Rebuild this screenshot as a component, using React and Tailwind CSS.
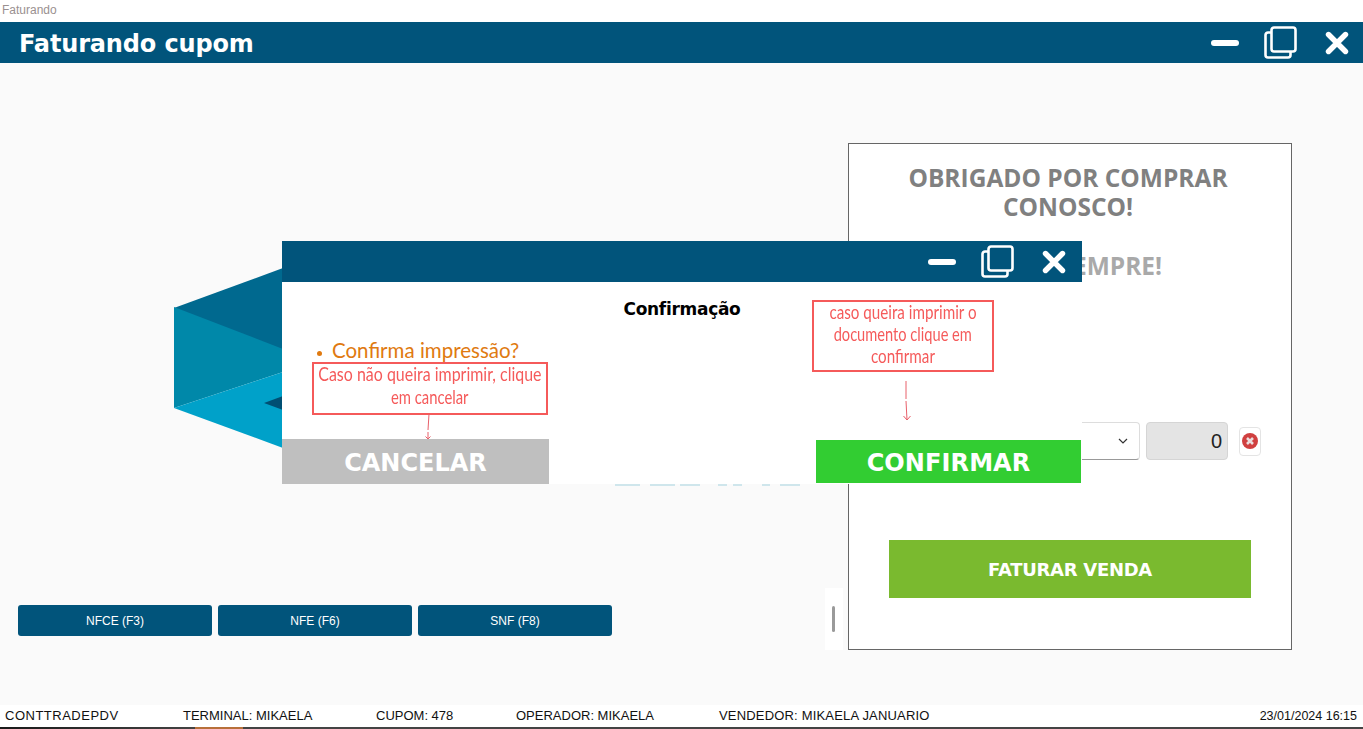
const headFont = "font-['DejaVu_Sans',sans-serif]";
const panelFont = "font-['Open_Sans',sans-serif]";
const handNote = "flex flex-col items-center justify-center border-2 border-[#f55a5a] bg-white text-center font-['Lato',sans-serif] text-[19px] whitespace-nowrap text-[#f55a5a]";

function WinControls() {
  return (
    <div className="flex items-center">
      <svg width="28" height="8" viewBox="0 0 28 8" className="mr-[25px]">
        <rect x="0" y="1" width="28" height="6" rx="3" fill="#fff" />
      </svg>
      <svg width="33" height="33" viewBox="0 0 33 33" className="mr-[28px]" fill="none" stroke="#fff" strokeWidth="2.6">
        <rect x="7.5" y="1.5" width="24" height="24" rx="2.5" />
        <path d="M7 6.5H4A2.5 2.5 0 0 0 1.5 9v20A2.5 2.5 0 0 0 4 31.5h20a2.5 2.5 0 0 0 2.5-2.5v-3" />
      </svg>
      <svg width="24" height="24" viewBox="0 0 24 24" fill="none" stroke="#fff" strokeWidth="5.4" strokeLinecap="round">
        <path d="M3.5 3.5 20.5 20.5M20.5 3.5 3.5 20.5" />
      </svg>
    </div>
  );
}

function Cube() {
  return (
    <svg width="110" height="184" viewBox="0 0 110 184" className="absolute left-[173px] top-[205px] blur-[0.5px]">
      <polygon points="1,40 110,0 110,84" fill="#00698f" />
      <polygon points="1,39 110,81 110,104 1,140" fill="#0088a9" />
      <polygon points="1,140 110,104 110,180" fill="#00a1c9" />
      <polygon points="91,135 110,128 110,142" fill="#004f73" />
    </svg>
  );
}

function LogoRemnant() {
  const bars = [[0, 25], [35, 25], [65, 20], [103, 9], [118, 9], [147, 8], [165, 20]];
  return (
    <svg width="190" height="2" viewBox="0 0 190 2" className="absolute left-[615px] top-[421px]">
      {bars.map(([x, w]) => (
        <rect key={x} x={x} y="0" width={w} height="2" fill="#cfe6ec" />
      ))}
    </svg>
  );
}

export default function App() {
  return (
    <div className="relative flex h-[729px] w-[1363px] flex-col overflow-hidden bg-white font-['Liberation_Sans',sans-serif]">
      <div className="h-[22px] pl-[2px] pt-[3px] text-[12px] leading-[15px] text-[#9a9090]">Faturando</div>

      <header className="flex h-[41px] items-center justify-between bg-[#01547b] pl-[19px] pr-[14px]">
        <h1 className={`${headFont} translate-y-[1px] text-[24px] font-bold leading-none tracking-[-0.15px] text-white`}>Faturando cupom</h1>
        <WinControls />
      </header>

      <main className="relative flex h-[642px] bg-[#fafafa]">
        <Cube />
        <LogoRemnant />
        <div className="flex w-[825px] flex-col justify-end pb-[69px] pl-[18px]">
          <div className="flex gap-[6px]">
            {["NFCE (F3)", "NFE (F6)", "SNF (F8)"].map((b) => (
              <button key={b} className="h-[31px] w-[194px] rounded-[3px] bg-[#01547b] text-[12px] text-white">{b}</button>
            ))}
          </div>
        </div>
        <div className="mt-[525px] flex h-[62px] w-[18px] items-center justify-center bg-white">
          <div className="mr-[1px] h-[26px] w-[3px] rounded-sm bg-[#9a9a9a]" />
        </div>
        <div className="ml-[5px] mr-[5px] mt-[80px] flex h-[507px] w-[444px] flex-col items-center border border-[#666] bg-white">
          <h2 className={`${panelFont} mt-[19px] w-[420px] -translate-x-[2px] text-center text-[24.5px] font-bold leading-[29px] text-[#808080]`}>
            OBRIGADO POR COMPRAR CONOSCO!
          </h2>
          <h3 className={`${panelFont} mt-[30px] -translate-x-[1px] text-center text-[24.5px] font-bold leading-[29px] text-[#a9a9a9]`}>VOLTE SEMPRE!</h3>
          <div className="mt-[142px] flex w-full items-center pl-[40px]">
            <div className="flex h-[38px] w-[251px] items-center justify-end rounded-[4px] border border-[#ddd] border-b-[#999] bg-white pr-[11px]">
              <svg width="10" height="6" viewBox="0 0 10 6" fill="none" stroke="#333" strokeWidth="1.2"><path d="M1 1l4 4 4-4" /></svg>
            </div>
            <div className="ml-[6px] flex h-[38px] w-[82px] items-center justify-end rounded-[4px] border border-[#d5d5d5] bg-[#e4e4e4] pr-[5px] text-[20px] text-[#222]">0</div>
            <div className="ml-[11px] flex h-[29px] w-[22px] items-center justify-center rounded-[4px] border border-[#e4e4e4] bg-white">
              <svg width="16" height="16" viewBox="0 0 16 16">
                <circle cx="8" cy="8" r="8" fill="#d04040" />
                <path d="M5 5l6 6M11 5l-6 6" stroke="#eadede" strokeWidth="2.6" />
              </svg>
            </div>
          </div>
          <button className={`${headFont} mt-[80px] h-[58px] w-[362px] bg-[#7aba2f] text-[18px] font-bold tracking-[-0.3px] text-white`}>FATURAR VENDA</button>
        </div>
      </main>

      <footer className="flex h-[22px] items-center bg-white pl-[5px] pr-[6px] text-[13px] text-[#111]">
        <span className="w-[178px] tracking-[0.5px]">CONTTRADEPDV</span>
        <span className="w-[193px]">TERMINAL: MIKAELA</span>
        <span className="w-[140px]">CUPOM: 478</span>
        <span className="w-[203px]">OPERADOR: MIKAELA</span>
        <span className="tracking-[0.18px]">VENDEDOR: MIKAELA JANUARIO</span>
        <span className="ml-auto text-[12.5px]">23/01/2024 16:15</span>
      </footer>
      <div className="flex h-[2px] bg-[linear-gradient(to_right,#1a1a1a,#444_200px)]">
        <div className="ml-[195px] h-[2px] w-[48px] bg-[#b8703a]" />
      </div>

      <section className="absolute left-[282px] top-[241px] flex h-[243px] w-[800px] flex-col bg-white">
        <div className="flex h-[41px] items-center justify-end bg-[#01547b] pr-[16px]"><WinControls /></div>
        <div className={`${headFont} pt-[17px] text-center text-[17px] font-bold leading-[20px] tracking-[-0.3px] text-black`}>Confirmação</div>
        <div className="flex items-center pl-[35px] pt-[18px] font-['Lato',sans-serif] text-[20.5px] leading-[26px] text-[#e07a10]">
          <span className="mr-[10px] h-[5px] w-[5px] translate-y-[3px] rounded-full bg-[#e07a10]" />
          Confirma impressão?
        </div>
        <div className="mt-auto flex items-end justify-between pr-[1px]">
          <button className={`${headFont} h-[45px] w-[267px] bg-[#bfbfbf] pt-[3px] text-[24px] font-bold text-white`}>CANCELAR</button>
          <button className={`${headFont} mb-[1px] h-[43px] w-[265px] bg-[#32cd32] pt-[3px] text-[24px] font-bold tracking-[0.1px] text-white`}>CONFIRMAR</button>
        </div>

        <div className={`${handNote} absolute left-[30px] top-[121px] h-[53px] w-[236px] pb-[7px] leading-[23px]`}>
          <span className="scale-x-[0.84]">Caso não queira imprimir, clique</span>
          <span className="scale-x-[0.78]">em cancelar</span>
        </div>
        <svg width="12" height="28" viewBox="0 0 12 28" fill="none" stroke="#e8606a" strokeWidth="1" className="absolute left-[140px] top-[172px]">
          <path d="M7 1 6 17M6 19V26M3.5 23.5 6 26l2.5-2.5" />
        </svg>
        <div className={`${handNote} absolute left-[530px] top-[59px] h-[72px] w-[182px] pb-[4px] leading-[22px]`}>
          <span className="scale-x-[0.8]">caso queira imprimir o</span>
          <span className="scale-x-[0.77]">documento clique em</span>
          <span className="scale-x-[0.8]">confirmar</span>
        </div>
        <svg width="12" height="42" viewBox="0 0 12 42" fill="none" stroke="#e8606a" strokeWidth="1" className="absolute left-[619px] top-[139px]">
          <path d="M5 1V19M5 21 6 40M2.5 36 6 40l3.500-4" />
        </svg>
      </section>
    </div>
  );
}
